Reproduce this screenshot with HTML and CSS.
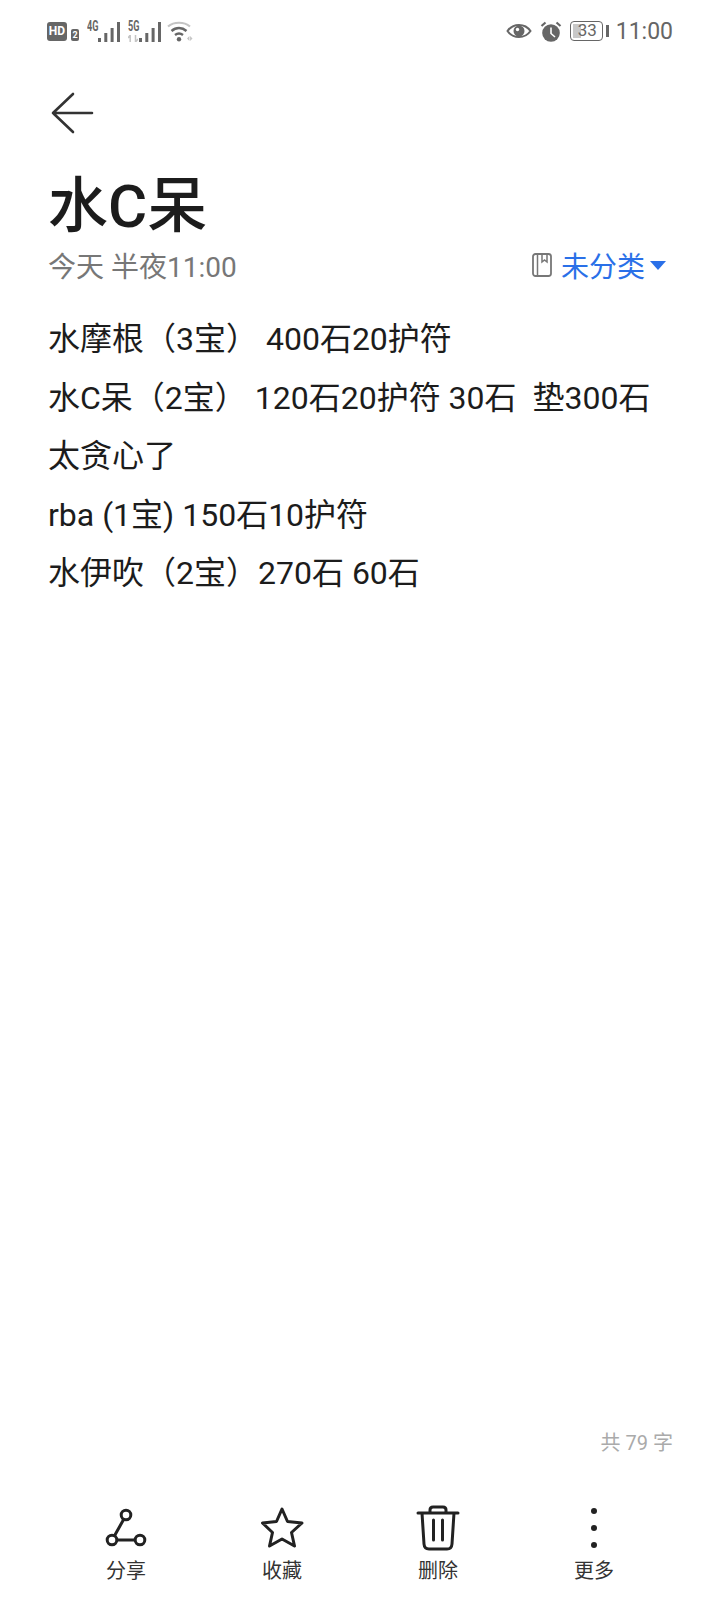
FILE: index.html
```html
<!DOCTYPE html>
<html lang="zh-CN">
<head>
    <meta charset="UTF-8">
    <title>水C呆</title>
    <link rel="stylesheet" href="styles.css">
</head>
<body>
    <div class="page">
        <div class="status-bar">
            <div class="status-left">
                <span class="hd-group"><span class="hd">HD</span><span class="hd-sim">2</span></span>
                <span class="signal">
                    <span class="net">4G</span>
                    <svg width="22" height="20" viewBox="0 0 22 20"><g fill="#666"><rect x="0" y="16" width="3" height="4"/><rect x="6.300" y="11" width="3" height="9"/><rect x="12.600" y="6" width="3" height="14"/><rect x="19" y="0" width="3" height="20"/></g></svg>
                </span>
                <span class="signal">
                    <span class="net">5G</span>
                    <svg class="net-arrows" width="10" height="7" viewBox="0 0 10 7"><path d="M2.200 0V7M2.200 0L0 3M7.500 0V7M7.500 7L10 4" stroke="#c4c4c4" stroke-width="1.500" fill="none"/></svg>
                    <svg width="22" height="20" viewBox="0 0 22 20"><g fill="#666"><rect x="0" y="16" width="3" height="4"/><rect x="6.300" y="11" width="3" height="9"/><rect x="12.600" y="6" width="3" height="14"/><rect x="19" y="0" width="3" height="20"/></g></svg>
                </span>
                <svg class="wifi" width="26" height="21" viewBox="0 0 26 21" fill="none"><path d="M1 5.500C7 .5 17 .5 23 5.500" stroke="#c4c4c4" stroke-width="2.200"/><path d="M4.500 10C9 6 15 6 19.500 10" stroke="#666" stroke-width="2.400"/><path d="M8 14C10.500 12 13.500 12 16 14" stroke="#666" stroke-width="2.400"/><circle cx="12" cy="18.200" r="2.200" fill="#666"/><path d="M20 17.500l2.400-2.500v5zM25.500 17.500L23.100 15v5z" fill="#c4c4c4"/></svg>
            </div>
            <div class="status-right">
                <svg width="26" height="18" viewBox="0 0 26 18" fill="none"><path d="M1.500 9C7 1 19 1 24.500 9C19 17 7 17 1.500 9Z" stroke="#666" stroke-width="2"/><circle cx="13" cy="9" r="5.500" fill="#666"/><circle cx="11.500" cy="7.500" r="1.700" fill="#fff"/></svg>
                <svg class="alarm" width="22" height="21" viewBox="0 0 22 21" fill="none"><circle cx="11" cy="12" r="8.800" fill="#666"/><path d="M11 6.500V12.500L15 16" stroke="#fff" stroke-width="1.600"/><path d="M1.500 5L5.500 1.500M20.500 5L16.500 1.500" stroke="#666" stroke-width="2.200"/></svg>
                <span class="battery"><span class="battery-box"><span class="battery-fill"></span><span class="battery-num">33</span></span><span class="battery-tip"></span></span>
                <span class="clock">11:00</span>
            </div>
        </div>

        <div class="toolbar">
            <svg width="44" height="44" viewBox="0 0 44 44" fill="none"><path d="M42 22H3M23 3L3 22L23 41" stroke="#333" stroke-width="2.600" stroke-linecap="round" stroke-linejoin="round"/></svg>
        </div>

        <h1 class="title">水C呆</h1>

        <div class="meta">
            <span class="date">今天 半夜11:00</span>
            <span class="category">
                <svg width="20" height="24" viewBox="0 0 20 24" fill="none"><rect x="1" y="1" width="18" height="22" rx="2.500" stroke="#777" stroke-width="1.800"/><path d="M5.500 1V23M10 1V9L12.500 7L15 9V1" stroke="#777" stroke-width="1.500"/></svg>
                <span class="category-name">未分类</span>
                <span class="caret"></span>
            </span>
        </div>

        <div class="note">
            <p>水摩根（3宝） 400石20护符</p>
            <p>水C呆（2宝） 120石20护符 30石&nbsp; 垫300石</p>
            <p>太贪心了</p>
            <p>rba (1宝) 150石10护符</p>
            <p>水伊吹（2宝）270石 60石</p>
        </div>

        <div class="count">共 79 字</div>

        <div class="actions">
            <div class="action">
                <svg width="44" height="48" viewBox="0 0 44 48" fill="none" stroke="#222" stroke-width="3"><circle cx="22" cy="12" r="4.800"/><circle cx="8" cy="37" r="4.800"/><circle cx="36" cy="37" r="4.800"/><path d="M19.600 16.500L10.500 32.800M12.800 37H31.200"/></svg>
                <span>分享</span>
            </div>
            <div class="action">
                <svg width="44" height="48" viewBox="0 0 44 48" fill="none"><path d="M22 6L27.500 18.500L42 20L31.500 29.500L34.500 43L22 36L9.500 43L12.500 29.500L2.500 20L16.500 18.500Z" stroke="#222" stroke-width="3" stroke-linejoin="round"/></svg>
                <span>收藏</span>
            </div>
            <div class="action">
                <svg width="44" height="48" viewBox="0 0 44 48" fill="none" stroke="#222" stroke-width="3" stroke-linecap="round"><path d="M2 10H42M14 10V7C14 5 15 4 17 4H27C29 4 30 5 30 7V10M6 10L8 41C8.200 44 10 46 13 46H31C34 46 35.800 44 36 41L38 10M17.500 17V37M26.500 17V37"/></svg>
                <span>删除</span>
            </div>
            <div class="action">
                <svg width="44" height="48" viewBox="0 0 44 48" fill="#222"><circle cx="22" cy="8" r="3"/><circle cx="22" cy="25" r="3"/><circle cx="22" cy="42" r="3"/></svg>
                <span>更多</span>
            </div>
        </div>
    </div>
</body>
</html>
```

FILE: styles.css
```css
* {
    box-sizing: border-box;
}
body {
    margin: 0;
    background-color: #fff;
    font-family: "Roboto", "Noto Sans CJK SC", sans-serif;
}
.page {
    display: flex;
    flex-direction: column;
    width: 720px;
    height: 1600px;
    overflow: hidden;
}
.status-bar {
    display: flex;
    justify-content: space-between;
    align-items: center;
    height: 62px;
    padding: 0 47px;
}
.status-left,
.status-right {
    display: flex;
    align-items: center;
}
.status-left {
    gap: 8px;
}
.status-right {
    gap: 8px;
}
.alarm {
    margin-right: -1px;
}
.hd-group {
    display: flex;
    align-items: flex-end;
    gap: 4px;
}
.hd {
    display: block;
    width: 20px;
    height: 19px;
    border-radius: 3px;
    background-color: #666;
    color: #fff;
    font-size: 12px;
    font-weight: 700;
    line-height: 19px;
    text-align: center;
}
.hd-sim {
    display: block;
    width: 8px;
    height: 12px;
    border-radius: 2px;
    background-color: #666;
    color: #fff;
    font-size: 9px;
    font-weight: 700;
    line-height: 12px;
    text-align: center;
}
.signal {
    position: relative;
    display: flex;
    align-items: flex-end;
    height: 21px;
}
.net {
    align-self: flex-start;
    width: 11px;
    color: #666;
    font-size: 14px;
    font-weight: 700;
    line-height: 11px;
    white-space: nowrap;
    transform: scaleX(0.65);
    transform-origin: left;
}
.net-arrows {
    position: absolute;
    left: 0;
    bottom: 0;
}
.wifi {
    margin-left: -2px;
}
.battery {
    display: flex;
    align-items: center;
    gap: 3px;
    margin-left: 1px;
}
.battery-box {
    position: relative;
    display: block;
    width: 33px;
    height: 20px;
    border: 1.500px solid #666;
    border-radius: 4px;
}
.battery-fill {
    position: absolute;
    left: 1.500px;
    top: 1.500px;
    width: 8px;
    height: 14px;
    background-color: #c8c8c8;
}
.battery-num {
    position: absolute;
    left: 1px;
    right: 0;
    top: 0;
    color: #666;
    font-size: 17px;
    line-height: 17px;
    text-align: center;
}
.battery-tip {
    display: block;
    width: 2.500px;
    height: 12px;
    background-color: #666;
}
.clock {
    margin-left: -1px;
    color: #666;
    font-size: 23px;
}
.toolbar {
    height: 76px;
    padding: 29px 0 0 50px;
}
.title {
    margin: 36px 0 0 48px;
    color: #1c1c1c;
    font-size: 60px;
    font-weight: 500;
    line-height: 66px;
}
.meta {
    display: flex;
    justify-content: space-between;
    align-items: center;
    height: 44px;
    margin-top: 3px;
    padding: 0 54px 0 48px;
}
.date {
    color: #777;
    font-size: 28px;
}
.category {
    display: flex;
    align-items: center;
    gap: 9px;
}
.category-name {
    margin-right: -4px;
    color: #2a70e8;
    font-size: 28px;
}
.caret {
    width: 0;
    height: 0;
    border-left: 8px solid transparent;
    border-right: 8px solid transparent;
    border-top: 9px solid #2a70e8;
}
.note {
    flex: 1;
    margin-top: 23px;
    padding-left: 48px;
}
.note p {
    margin: 0;
    color: #1c1c1c;
    font-size: 32px;
    line-height: 58.600px;
}
.count {
    padding-right: 47px;
    color: #aaa;
    font-size: 20px;
    text-align: right;
}
.actions {
    display: flex;
    height: 97px;
    margin-top: 47px;
    padding-left: 48px;
}
.action {
    display: flex;
    flex-direction: column;
    align-items: center;
    gap: 6px;
    width: 156px;
    color: #333;
    font-size: 20px;
    line-height: 28px;
}
```
